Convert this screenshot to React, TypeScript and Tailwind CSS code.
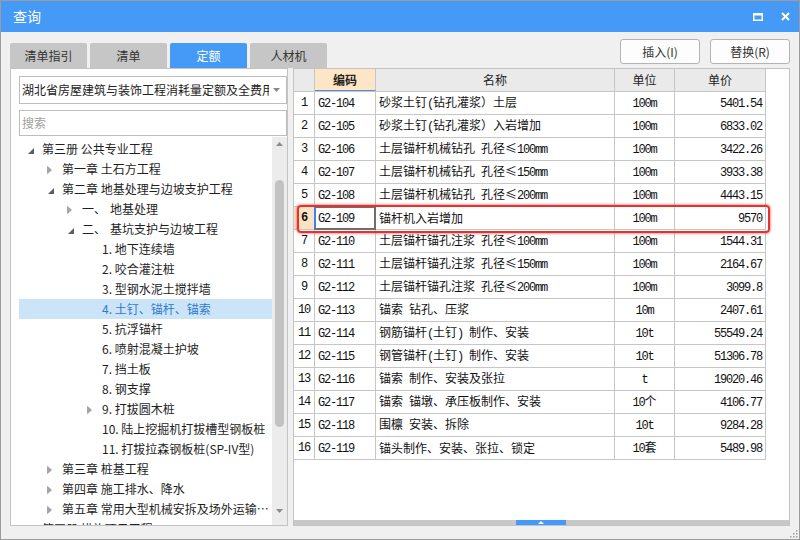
import React from 'react';

type Row = { no: number; code: string; name: string; unit: string; price: string };

const rows: Row[] = [
  { no: 1, code: 'G2-104', name: '砂浆土钉(钻孔灌浆）土层', unit: '100m', price: '5401.54' },
  { no: 2, code: 'G2-105', name: '砂浆土钉(钻孔灌浆）入岩增加', unit: '100m', price: '6833.02' },
  { no: 3, code: 'G2-106', name: '土层锚杆机械钻孔 孔径≤100mm', unit: '100m', price: '3422.26' },
  { no: 4, code: 'G2-107', name: '土层锚杆机械钻孔 孔径≤150mm', unit: '100m', price: '3933.38' },
  { no: 5, code: 'G2-108', name: '土层锚杆机械钻孔 孔径≤200mm', unit: '100m', price: '4443.15' },
  { no: 6, code: 'G2-109', name: '锚杆机入岩增加', unit: '100m', price: '9570' },
  { no: 7, code: 'G2-110', name: '土层锚杆锚孔注浆 孔径≤100mm', unit: '100m', price: '1544.31' },
  { no: 8, code: 'G2-111', name: '土层锚杆锚孔注浆 孔径≤150mm', unit: '100m', price: '2164.67' },
  { no: 9, code: 'G2-112', name: '土层锚杆锚孔注浆 孔径≤200mm', unit: '100m', price: '3099.8' },
  { no: 10, code: 'G2-113', name: '锚索 钻孔、压浆', unit: '10m', price: '2407.61' },
  { no: 11, code: 'G2-114', name: '钢筋锚杆(土钉) 制作、安装', unit: '10t', price: '55549.24' },
  { no: 12, code: 'G2-115', name: '钢管锚杆(土钉) 制作、安装', unit: '10t', price: '51306.78' },
  { no: 13, code: 'G2-116', name: '锚索 制作、安装及张拉', unit: 't', price: '19020.46' },
  { no: 14, code: 'G2-117', name: '锚索 锚墩、承压板制作、安装', unit: '10个', price: '4106.77' },
  { no: 15, code: 'G2-118', name: '围檩 安装、拆除', unit: '10t', price: '9284.28' },
  { no: 16, code: 'G2-119', name: '锚头制作、安装、张拉、锁定', unit: '10套', price: '5489.98' },
];

type Node = { lv: number; icon?: 'open' | 'closed'; label: string; rest?: string; sel?: boolean };

const tree: Node[] = [
  { lv: 0, icon: 'open', label: '第三册 公共专业工程' },
  { lv: 1, icon: 'closed', label: '第一章 土石方工程' },
  { lv: 1, icon: 'open', label: '第二章 地基处理与边坡支护工程' },
  { lv: 2, icon: 'closed', label: '一、', rest: '地基处理' },
  { lv: 2, icon: 'open', label: '二、', rest: '基坑支护与边坡工程' },
  { lv: 3, label: '1. 地下连续墙' },
  { lv: 3, label: '2. 咬合灌注桩' },
  { lv: 3, label: '3. 型钢水泥土搅拌墙' },
  { lv: 3, label: '4. 土钉、锚杆、锚索', sel: true },
  { lv: 3, label: '5. 抗浮锚杆' },
  { lv: 3, label: '6. 喷射混凝土护坡' },
  { lv: 3, label: '7. 挡土板' },
  { lv: 3, label: '8. 钢支撑' },
  { lv: 3, icon: 'closed', label: '9. 打拔圆木桩' },
  { lv: 3, label: '10. 陆上挖掘机打拔槽型钢板桩' },
  { lv: 3, label: '11. 打拔拉森钢板桩(SP-IV型)' },
  { lv: 1, icon: 'closed', label: '第三章 桩基工程' },
  { lv: 1, icon: 'closed', label: '第四章 施工排水、降水' },
  { lv: 1, icon: 'closed', label: '第五章 常用大型机械安拆及场外运输费用' },
  { lv: 0, label: '第四册 措施项目工程' },
];

const indent = ['pl-[7px]', 'pl-[27px]', 'pl-[47px]', 'pl-[67px]'];

// SimSun-like half-width latin runs
function Mixed({ t }: { t: string }) {
  const parts = t.split(/([\x20-\x7e]+)/);
  return (
    <span className="whitespace-pre">
      {parts.map((p, i) =>
        i % 2 === 1 ? (
          <span key={i} className="font-['Liberation_Mono'] tracking-[-1.2px]">
            {p}
          </span>
        ) : (
          p
        )
      )}
    </span>
  );
}

function Arrow({ icon }: { icon?: 'open' | 'closed' }) {
  if (icon === 'open')
    return (
      <svg width="6" height="6" viewBox="0 0 6 6" className="ml-[2px] mt-[3px]">
        <path d="M6 0 L6 6 L0 6 Z" fill="#5c5c5c" />
      </svg>
    );
  if (icon === 'closed')
    return (
      <svg width="5" height="8" viewBox="0 0 5 8" className="ml-[1px] mt-[1px]">
        <path d="M0.5 0.5 L4.5 4 L0.5 7.5 Z" fill="#a6a6a6" stroke="#8a8a8a" strokeWidth="0.6" />
      </svg>
    );
  return null;
}

export default function App() {
  const tabs = ['清单指引', '清单', '定额', '人材机'];

  return (
    <div className="w-[800px] h-[540px] bg-[#f0f0f0] border border-[#9c9c9c] flex flex-col font-['Noto_Sans_CJK_SC',sans-serif] text-[12px] text-[#222] overflow-hidden">
      {/* Title bar */}
      <div className="h-[31px] shrink-0 bg-[#4599f7] flex items-center pl-[12px] pr-[9px] text-white">
        <span className="text-[14px]">查询</span>
        <div className="flex-1" />
        <svg width="10" height="8" viewBox="0 0 10 8" className="mr-[18px]">
          <rect x="0.75" y="1" width="8.5" height="6.25" fill="none" stroke="#fff" strokeWidth="1.5" />
          <rect x="0" y="0" width="10" height="2.5" fill="#fff" />
        </svg>
        <svg width="9" height="9" viewBox="0 0 9 9">
          <path d="M1 1 L8 8 M8 1 L1 8" stroke="#fff" strokeWidth="2" />
        </svg>
      </div>

      {/* Tabs + buttons */}
      <div className="h-[36px] shrink-0 flex items-start pl-[9px] pr-[9px]">
        <div className="flex gap-[3px] mt-[11px]">
          {tabs.map((t) => (
            <div
              key={t}
              className={`w-[77px] h-[25px] rounded-t-[2px] flex items-center justify-center text-[12px] ${t === '定额' ? 'bg-[#4599f7] text-white' : 'bg-[#c6c6c6] text-[#333]'}`}
            >
              {t}
            </div>
          ))}
        </div>
        <div className="flex-1" />
        <div className="flex gap-[10px] mt-[7px]">
          <button className="w-[80px] h-[25px] bg-[#fdfdfd] border border-[#b4b4b4] rounded-[3px] text-[12px] text-[#333]">插入(I)</button>
          <button className="w-[80px] h-[25px] bg-[#fdfdfd] border border-[#b4b4b4] rounded-[3px] text-[12px] text-[#333]">替换(R)</button>
        </div>
      </div>

      {/* Main area */}
      <div className="h-[458px] shrink-0 flex pl-[9px] pr-[9px] gap-[5px]">
        {/* Left panel */}
        <div className="w-[278px] h-full bg-white border border-[#c3c3c3] flex flex-col pt-[7px] pl-[8px]">
          <div className="h-[28px] w-[268px] border border-[#bdbdbd] flex items-center pl-[2px] pr-[6px]">
            <div className="flex-1 overflow-hidden whitespace-nowrap text-[12px] text-[#222]">湖北省房屋建筑与装饰工程消耗量定额及全费用基价表</div>
            <svg width="7" height="4" viewBox="0 0 7 4" className="ml-[4px]">
              <path d="M0 0 L7 0 L3.5 4 Z" fill="#8a8a8a" />
            </svg>
          </div>
          <div className="h-[26px] w-[268px] mt-[6px] border border-[#bdbdbd] flex items-center pl-[2px] text-[#a0a0a0] text-[12px]">搜索</div>
          <div className="flex-1 flex mt-[1px] overflow-hidden">
            <div className="w-[253px] pt-[2px] overflow-hidden">
              {tree.map((n, i) => (
                <div
                  key={i}
                  className={`h-[20px] flex items-center whitespace-nowrap ${indent[n.lv]} ${n.sel ? 'bg-[#cce4f7] text-[#2f7ad2]' : 'text-[#1e1e1e]'}`}
                >
                  <div className="w-[16px] h-[20px] flex items-center shrink-0">
                    <Arrow icon={n.icon} />
                  </div>
                  <span className="leading-[20px] overflow-hidden text-ellipsis">{n.label}</span>
                  {n.rest && <span className="ml-[4px] leading-[20px]">{n.rest}</span>}
                </div>
              ))}
            </div>
            <div className="w-[15px] h-full bg-[#ececec] flex flex-col items-center">
              <svg width="7" height="4" viewBox="0 0 7 4" className="mt-[5px]">
                <path d="M0 4 L7 4 L3.5 0 Z" fill="#8a8a8a" />
              </svg>
              <div className="w-[9px] h-[247px] mt-[34px] rounded-full bg-[#c2c2c2]" />
              <div className="flex-1" />
              <svg width="7" height="4" viewBox="0 0 7 4" className="mb-[12px]">
                <path d="M0 0 L7 0 L3.5 4 Z" fill="#8a8a8a" />
              </svg>
            </div>
          </div>
        </div>

        {/* Right panel */}
        <div className="w-[497px] h-full bg-white border border-[#c3c3c3] relative flex flex-col">
          <div className="flex-1">
            <div className="w-[472px]">
              <div className="h-[23px] flex bg-[#eaeaea] border-b border-[#c6c6c6] text-[12px] text-[#222]">
                <div className="w-[21px] border-r border-[#c6c6c6]" />
                <div className="w-[61px] border-r border-[#c6c6c6] bg-[#fde5c6] border-b border-b-[#4f8fdc] flex items-center justify-center font-bold">编码</div>
                <div className="w-[239px] border-r border-[#c6c6c6] flex items-center justify-center">名称</div>
                <div className="w-[60px] border-r border-[#c6c6c6] flex items-center justify-center">单位</div>
                <div className="w-[91px] border-r border-[#c6c6c6] flex items-center justify-center">单价</div>
              </div>
              {rows.map((r) => {
                const cur = r.no === 6;
                return (
                  <div key={r.no} className="h-[23px] flex border-b border-[#c6c6c6] text-[12px] text-[#111] leading-[22px]">
                    <div className={`w-[21px] border-r border-[#c6c6c6] flex items-center justify-center ${cur ? 'bg-[#fde3c2] font-bold' : ''}`}>
                      <span className="font-['Liberation_Mono'] tracking-[-1.2px]">{r.no}</span>
                    </div>
                    <div className="w-[61px] border-r border-[#c6c6c6] flex items-center pl-[3px] relative">
                      <Mixed t={r.code} />
                      {cur && (
                        <div className="absolute left-[-1px] top-[-1px] right-[-1px] bottom-[-1px] border-2 border-[#6e6e6e] border-l-[#3b82f6]" />
                      )}
                    </div>
                    <div className="w-[239px] border-r border-[#c6c6c6] flex items-center pl-[3px] overflow-hidden">
                      <Mixed t={r.name} />
                    </div>
                    <div className="w-[60px] border-r border-[#c6c6c6] flex items-center justify-center">
                      <Mixed t={r.unit} />
                    </div>
                    <div className="w-[91px] border-r border-[#c6c6c6] flex items-center justify-end pr-[3px]">
                      <Mixed t={r.price} />
                    </div>
                  </div>
                );
              })}
            </div>
          </div>
          {/* bottom splitter strip */}
          <div className="h-[5px] bg-[#c8c8c8] flex">
            <div className="w-[222px]" />
            <div className="w-[50px] bg-[#4599f7] flex items-center justify-center">
              <svg width="6" height="3" viewBox="0 0 6 3">
                <path d="M0 3 L6 3 L3 0 Z" fill="#fff" />
              </svg>
            </div>
          </div>
          {/* highlight box over row 6 */}
          <div className="absolute left-[3px] top-[136px] w-[473px] h-[28px] border-[2.5px] border-[#e8312e] rounded-[4px] shadow-[0_0_2px_1px_rgba(232,49,46,0.45)] pointer-events-none" />
        </div>
      </div>

      {/* bottom edge with grip */}
      <div className="flex-1 flex items-end justify-end pr-[1px] pb-[1px]">
        <svg width="8" height="8" viewBox="0 0 8 8">
          <rect x="6" y="0" width="1.5" height="1.5" fill="#a0a0a0" />
          <rect x="3" y="3" width="1.5" height="1.5" fill="#a0a0a0" />
          <rect x="6" y="3" width="1.5" height="1.5" fill="#a0a0a0" />
          <rect x="0" y="6" width="1.5" height="1.5" fill="#a0a0a0" />
          <rect x="3" y="6" width="1.5" height="1.5" fill="#a0a0a0" />
          <rect x="6" y="6" width="1.5" height="1.5" fill="#a0a0a0" />
        </svg>
      </div>
    </div>
  );
}
